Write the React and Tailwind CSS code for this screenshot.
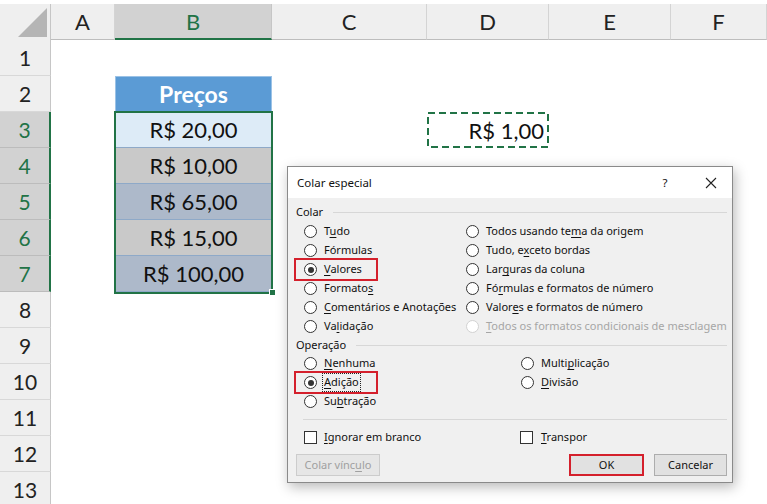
import React from "react";

const SHEET_FONT = { fontFamily: "Lato, 'Open Sans', sans-serif" };
const UI_FONT = { fontFamily: "'Noto Sans', 'Open Sans', sans-serif" };

const COLUMNS = [
  { key: "A", width: "w-[64px]" },
  { key: "B", width: "w-[157px]" },
  { key: "C", width: "w-[155px]" },
  { key: "D", width: "w-[122px]" },
  { key: "E", width: "w-[122px]" },
  { key: "F", width: "flex-1" },
];

const PRICES = {
  3: { text: "R$ 20,00", bg: "bg-[#ddebf7]" },
  4: { text: "R$ 10,00", bg: "bg-[#c9c9c9]" },
  5: { text: "R$ 65,00", bg: "bg-[#adb9ca]" },
  6: { text: "R$ 15,00", bg: "bg-[#c9c9c9]" },
  7: { text: "R$ 100,00", bg: "bg-[#adb9ca]" },
};

function CornerCell() {
  return (
    <div className="w-[51px] h-full shrink-0 border-r border-[#c6c6c6] bg-[#efefef] relative">
      <svg className="absolute left-0 top-0" width="51" height="36" viewBox="0 0 51 36">
        <polygon points="18,33 47,33 47,4" fill="#b5b5b5" />
      </svg>
    </div>
  );
}

function ColumnHeader({ col }) {
  if (col.key === "B") {
    return (
      <div className={`${col.width} shrink-0 h-full bg-[#d2d2d2] border-r border-[#c6c6c6] border-b-2 border-b-[#217346] flex items-center justify-center text-[#217346] text-[22px]`}>
        {col.key}
      </div>
    );
  }
  return (
    <div className={`${col.width} shrink-0 h-full bg-[#efefef] border-r border-[#d4d4d4] border-b border-b-[#bdbdbd] flex items-center justify-center text-[#222222] text-[22px]`}>
      {col.key}
    </div>
  );
}

function RowHeader({ n }) {
  const selected = n >= 3 && n <= 7;
  if (selected) {
    return (
      <div className="w-[51px] shrink-0 h-full bg-[#d2d2d2] border-r-2 border-[#217346] border-b border-b-[#bcbcbc] flex items-center justify-center text-[#217346] text-[21px]">
        {n}
      </div>
    );
  }
  return (
    <div className="w-[51px] shrink-0 h-full bg-[#efefef] border-r border-[#c6c6c6] border-b border-b-[#d8d8d8] flex items-center justify-center text-[#222222] text-[21px]">
      {n}
    </div>
  );
}

function MarchingAnts() {
  return (
    <svg className="absolute inset-0" width="122" height="36" viewBox="0 0 122 36">
      <rect
        x="1"
        y="1"
        width="120"
        height="34"
        fill="none"
        stroke="#217346"
        strokeWidth="2"
        strokeDasharray="7 4"
      />
    </svg>
  );
}

function Cell({ col, row }) {
  if (col.key === "B" && row === 2) {
    return (
      <div className={`${col.width} shrink-0 h-full bg-[#5b9bd5] border-x border-t border-[#9bc2e6] flex items-center justify-center text-white font-bold text-[23px]`}>
        Preços
      </div>
    );
  }
  if (col.key === "B" && PRICES[row]) {
    const p = PRICES[row];
    return (
      <div className={`${col.width} shrink-0 h-full ${p.bg} border-b border-[#8ea9c8] flex items-center justify-center text-[#111111] text-[22px]`}>
        {p.text}
      </div>
    );
  }
  if (col.key === "D" && row === 3) {
    return (
      <div className={`${col.width} shrink-0 h-full relative flex items-center justify-end pr-[5px] text-[#111111] text-[22px]`}>
        R$ 1,00
        <MarchingAnts />
      </div>
    );
  }
  return <div className={`${col.width} shrink-0 h-full`} />;
}

function Sheet() {
  const rows = Array.from({ length: 13 }, (_, i) => i + 1);
  return (
    <div className="relative w-[767px] h-[504px] overflow-hidden bg-white" style={SHEET_FONT}>
      <div className="pt-[4px]">
        <div className="flex h-[36px]">
          <CornerCell />
          {COLUMNS.map((c) => (
            <ColumnHeader key={c.key} col={c} />
          ))}
        </div>
        {rows.map((r) => (
          <div key={r} className="flex h-[36px]">
            <RowHeader n={r} />
            {COLUMNS.map((c) => (
              <Cell key={c.key} col={c} row={r} />
            ))}
          </div>
        ))}
      </div>

      {/* selected range B3:B7 */}
      <div className="absolute left-[114px] top-[111px] w-[159px] h-[183px] border-2 border-[#217346] pointer-events-none" />
      <div className="absolute left-[269px] top-[289px] w-[7px] h-[7px] bg-[#217346] border border-white" />

      <PasteSpecialDialog />
    </div>
  );
}

function Radio({ checked, disabled }) {
  return (
    <span
      className={`w-[13px] h-[13px] shrink-0 rounded-full border bg-white flex items-center justify-center ${
        disabled ? "border-[#d2d2d2]" : "border-[#333333]"
      }`}
    >
      {checked && <span className="w-[6px] h-[6px] rounded-full bg-[#333333]" />}
    </span>
  );
}

function Checkbox() {
  return <span className="w-[13px] h-[13px] shrink-0 border border-[#333333] bg-white" />;
}

function Label({ parts, disabled, focus }) {
  const [a, k, b] = parts;
  return (
    <span
      className={`${disabled ? "text-[#a6a6a6]" : "text-[#111111]"} ${
        focus ? "outline-1 outline-dotted outline-[#222222] outline-offset-0 px-[1px] -mx-[1px]" : ""
      } whitespace-nowrap`}
    >
      {a}
      {k && <span className="underline underline-offset-2">{k}</span>}
      {b}
    </span>
  );
}

function RadioRow({ parts, checked, disabled, focus, highlight }) {
  return (
    <div className="relative h-[19px] flex items-center gap-[7px]">
      <Radio checked={checked} disabled={disabled} />
      <Label parts={parts} disabled={disabled} focus={focus} />
      {highlight && (
        <span className="absolute left-[-10px] top-[-2px] w-[84px] h-[23px] border-2 border-[#d4202c] pointer-events-none" />
      )}
    </div>
  );
}

function GroupHeader({ title }) {
  return (
    <div className="h-[18px] flex items-center gap-[10px] text-[#111111]">
      <span>{title}</span>
      <span className="flex-1 h-px bg-[#d7d7d7]" />
    </div>
  );
}

function PasteSpecialDialog() {
  return (
    <div
      className="absolute left-[287px] top-[166px] w-[446px] h-[317px] border border-[#8a8a8a] bg-[#f0f0f0] shadow-[2px_4px_12px_rgba(0,0,0,0.28)] text-[11px]"
      style={UI_FONT}
    >
      <div className="h-[31px] bg-white flex items-center pl-[9px] text-[11.5px] text-[#111111]">
        <span>Colar especial</span>
        <span className="ml-auto w-[30px] text-center">?</span>
        <span className="ml-[10px] w-[42px] flex items-center justify-center">
          <svg width="12" height="12" viewBox="0 0 12 12">
            <path d="M1 1 L11 11 M11 1 L1 11" stroke="#222222" strokeWidth="1.1" fill="none" />
          </svg>
        </span>
      </div>

      <div className="pl-[8px] pr-[5px] pt-[5px]">
        <GroupHeader title="Colar" />
        <div className="mt-[1px] pl-[8px] grid grid-cols-[162px_1fr]">
          <div className="flex flex-col">
            <RadioRow parts={["T", "u", "do"]} />
            <RadioRow parts={["Fórmulas", "", ""]} />
            <RadioRow parts={["", "V", "alores"]} checked highlight />
            <RadioRow parts={["Formato", "s", ""]} />
            <RadioRow parts={["", "C", "omentários e Anotações"]} />
            <RadioRow parts={["Va", "l", "idação"]} />
          </div>
          <div className="flex flex-col">
            <RadioRow parts={["Todos usando te", "m", "a da origem"]} />
            <RadioRow parts={["Tudo, e", "x", "ceto bordas"]} />
            <RadioRow parts={["Lar", "g", "uras da coluna"]} />
            <RadioRow parts={["Fó", "r", "mulas e formatos de número"]} />
            <RadioRow parts={["Valor", "e", "s e formatos de número"]} />
            <RadioRow parts={["", "T", "odos os formatos condicionais de mesclagem"]} disabled />
          </div>
        </div>

        <GroupHeader title="Operação" />
        <div className="pl-[8px] grid grid-cols-[217px_1fr]">
          <div className="flex flex-col">
            <RadioRow parts={["", "N", "enhuma"]} />
            <RadioRow parts={["", "A", "dição"]} checked focus highlight />
            <RadioRow parts={["Su", "b", "tração"]} />
          </div>
          <div className="flex flex-col">
            <RadioRow parts={["Multi", "p", "licação"]} />
            <RadioRow parts={["", "D", "ivisão"]} />
          </div>
        </div>

        <div className="mt-[8px] ml-[7px] h-px bg-[#d7d7d7]" />

        <div className="mt-[8px] pl-[8px] grid grid-cols-[216px_1fr] h-[18px] items-center">
          <div className="flex items-center gap-[7px]">
            <Checkbox />
            <Label parts={["", "I", "gnorar em branco"]} />
          </div>
          <div className="flex items-center gap-[8px]">
            <Checkbox />
            <Label parts={["", "T", "ranspor"]} />
          </div>
        </div>

        <div className="mt-[8px] flex items-center h-[22px]">
          <div className="w-[84px] h-full border border-[#cccccc] bg-[#e6e6e6] text-[#a0a0a0] flex items-center justify-center">
            <span>
              Colar vínc<span className="underline underline-offset-2">u</span>lo
            </span>
          </div>
          <div className="ml-auto relative w-[75px] h-full border border-[#adadad] bg-[#e1e1e1] text-[#111111] flex items-center justify-center">
            OK
            <span className="absolute -inset-[1px] border-2 border-[#d4202c]" />
          </div>
          <div className="ml-[10px] w-[73px] h-full border border-[#adadad] bg-[#e1e1e1] text-[#111111] flex items-center justify-center">
            Cancelar
          </div>
        </div>
      </div>
    </div>
  );
}

export default function App() {
  return <Sheet />;
}
